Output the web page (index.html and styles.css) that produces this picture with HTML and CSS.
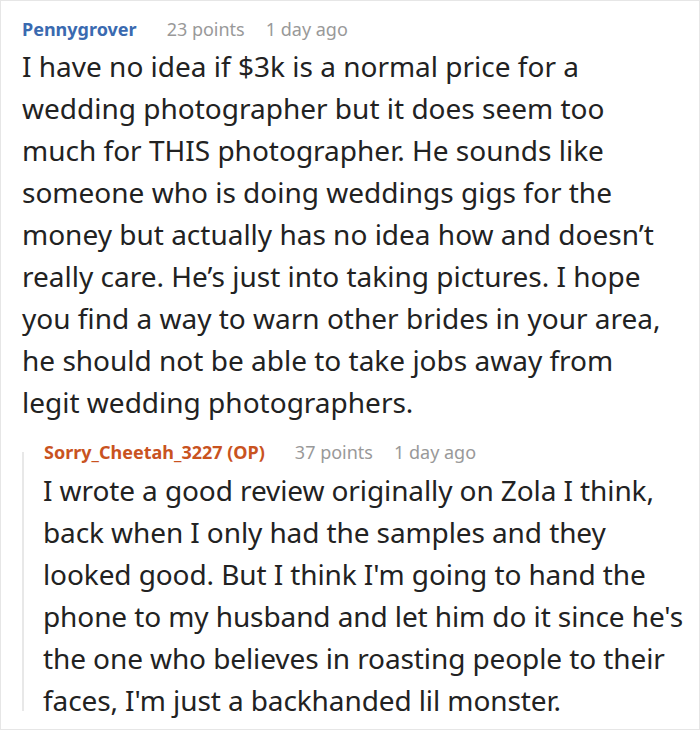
FILE: index.html
```html
<!DOCTYPE html>
<html lang="en">
<head>
    <meta charset="UTF-8">
    <meta name="viewport" content="width=device-width, initial-scale=1.0">
    <title>Comments</title>
    <link rel="stylesheet" href="styles.css">
</head>
<body>
    <section class="thread">
        <div class="comment">
            <div class="meta">
                <span class="author">Pennygrover</span>
                <span class="points">23 points</span>
                <span class="time">1 day ago</span>
            </div>
            <p class="text">I have no idea if $3k is a normal price for a wedding photographer but it does seem too much for THIS photographer. He sounds like someone who is doing weddings gigs for the money but actually has no idea how and doesn’t really care. He’s just into taking pictures. I hope you find a way to warn other brides in your area, he should not be able to take jobs away from legit wedding photographers.</p>

            <div class="reply">
                <div class="meta">
                    <span class="author op">Sorry_Cheetah_3227 (OP)</span>
                    <span class="points">37 points</span>
                    <span class="time">1 day ago</span>
                </div>
                <p class="text">I wrote a good review originally on Zola I think, back when I only had the samples and they looked good. But I think I'm going to hand the phone to my husband and let him do it since he's the one who believes in roasting people to their faces, I'm just a backhanded lil monster.</p>
            </div>
        </div>
    </section>
</body>
</html>
```

FILE: styles.css
```css
body{
    margin: 0;
    background: #fff;
    font-family: "Noto Sans", "Open Sans", sans-serif;
    color: #222;
}
.thread{
    box-sizing: border-box;
    width: 700px;
    height: 730px;
    border: 1px solid #e6e6e6;
    overflow: hidden;
}
.comment{
    padding: 16px 0 0 21px;
}
.meta{
    font-size: 18px;
    line-height: 24px;
    display: flex;
    white-space: nowrap;
}
.author{
    font-weight: bold;
    color: #3a6ab0;
}
.author.op{
    color: #c9531f;
}
.points{
    color: #999;
    margin-left: 30px;
}
.time{
    color: #999;
    margin-left: 21px;
}
.text{
    margin: 4px 28px 0 0;
    font-size: 28px;
    line-height: 42px;
}
.reply{
    margin-top: 17px;
    padding-left: 22px;
    /* thread line, shorter than the reply itself */
    background: linear-gradient(#e8e8e8, #e8e8e8) no-repeat 0 12px / 2px calc(100% - 22px);
}
.reply .text{
    margin: 5px 0 0 -1px;
    letter-spacing: -0.1px;
}
```
